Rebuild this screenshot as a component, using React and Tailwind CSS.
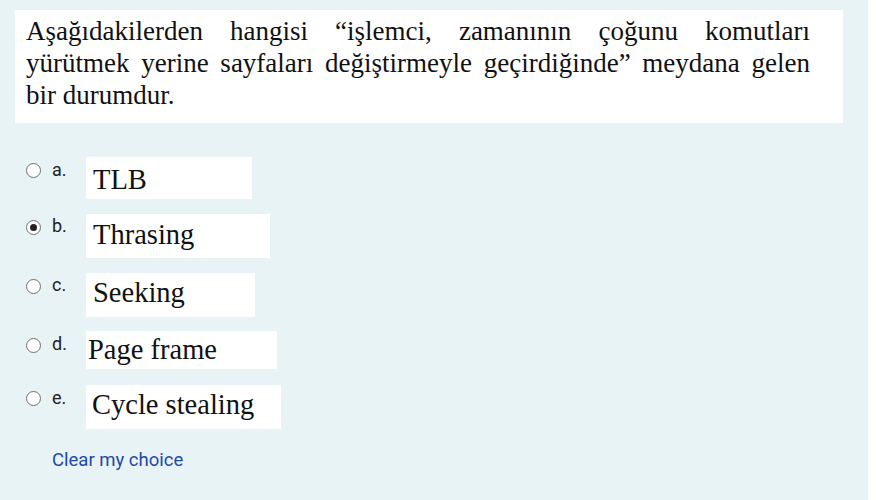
import React from "react";

const serif = { fontFamily: '"Liberation Serif", "Times New Roman", serif' };
const sans = { fontFamily: 'Roboto, "Liberation Sans", Arial, sans-serif' };

function Radio({ checked }) {
  return (
    <div className="w-[15px] h-[15px] rounded-full border-[1.6px] border-[#707070] bg-white flex items-center justify-center shrink-0">
      {checked && <div className="w-[7px] h-[7px] rounded-full bg-[#222]" />}
    </div>
  );
}

function Row({ letter, text, checked, className, boxClass, labelMt, radioMt }) {
  return (
    <div className={"flex items-start ml-[26px] " + className}>
      <div className={radioMt}>
        <Radio checked={checked} />
      </div>
      <div
        className={"ml-[11px] w-[34px] text-[18px] leading-[20px] text-[#1d2125] " + labelMt}
        style={sans}
      >
        {letter}
      </div>
      <div
        className={"bg-white text-[28.5px] leading-[28px] text-[#111] " + boxClass}
        style={serif}
      >
        {text}
      </div>
    </div>
  );
}

export default function App() {
  return (
    <div className="bg-white w-[876px] h-[500px]">
      <div className="bg-[#e7f3f5] w-[868px] h-[500px] pt-[10px]">
        <div
          className="ml-[15px] w-[828px] h-[113px] bg-white pl-[11px] pr-[33px] pt-[5px] text-[27px] leading-[32px] text-[#111] text-justify"
          style={serif}
        >
          Aşağıdakilerden hangisi “işlemci, zamanının çoğunu komutları yürütmek yerine sayfaları değiştirmeyle geçirdiğinde” meydana gelen bir durumdur.
        </div>

        <Row
          letter="a."
          text="TLB"
          className="mt-[34px]"
          radioMt="mt-[6px]"
          labelMt="mt-[3px]"
          boxClass="w-[166px] h-[42px] pl-[7px] pt-[9px]"
        />
        <Row
          letter="b."
          text="Thrasing"
          checked
          className="mt-[15px]"
          radioMt="mt-[6px]"
          labelMt="mt-[2px]"
          boxClass="w-[184px] h-[44px] pl-[7px] pt-[7px]"
        />
        <Row
          letter="c."
          text="Seeking"
          className="mt-[15px]"
          radioMt="mt-[6px]"
          labelMt="mt-[2px]"
          boxClass="w-[169px] h-[44px] pl-[7px] pt-[6px]"
        />
        <Row
          letter="d."
          text="Page frame"
          className="mt-[14px]"
          radioMt="mt-[7px]"
          labelMt="mt-[3px]"
          boxClass="w-[191px] h-[38px] pl-[2px] pt-[5px]"
        />
        <Row
          letter="e."
          text="Cycle stealing"
          className="mt-[16px]"
          radioMt="mt-[6px]"
          labelMt="mt-[3px]"
          boxClass="w-[195px] h-[44px] pl-[6px] pt-[6px]"
        />

        <div
          className="ml-[52px] mt-[19px] text-[18.5px] leading-[24px] text-[#1f4aa8]"
          style={sans}
        >
          Clear my choice
        </div>
      </div>
    </div>
  );
}
